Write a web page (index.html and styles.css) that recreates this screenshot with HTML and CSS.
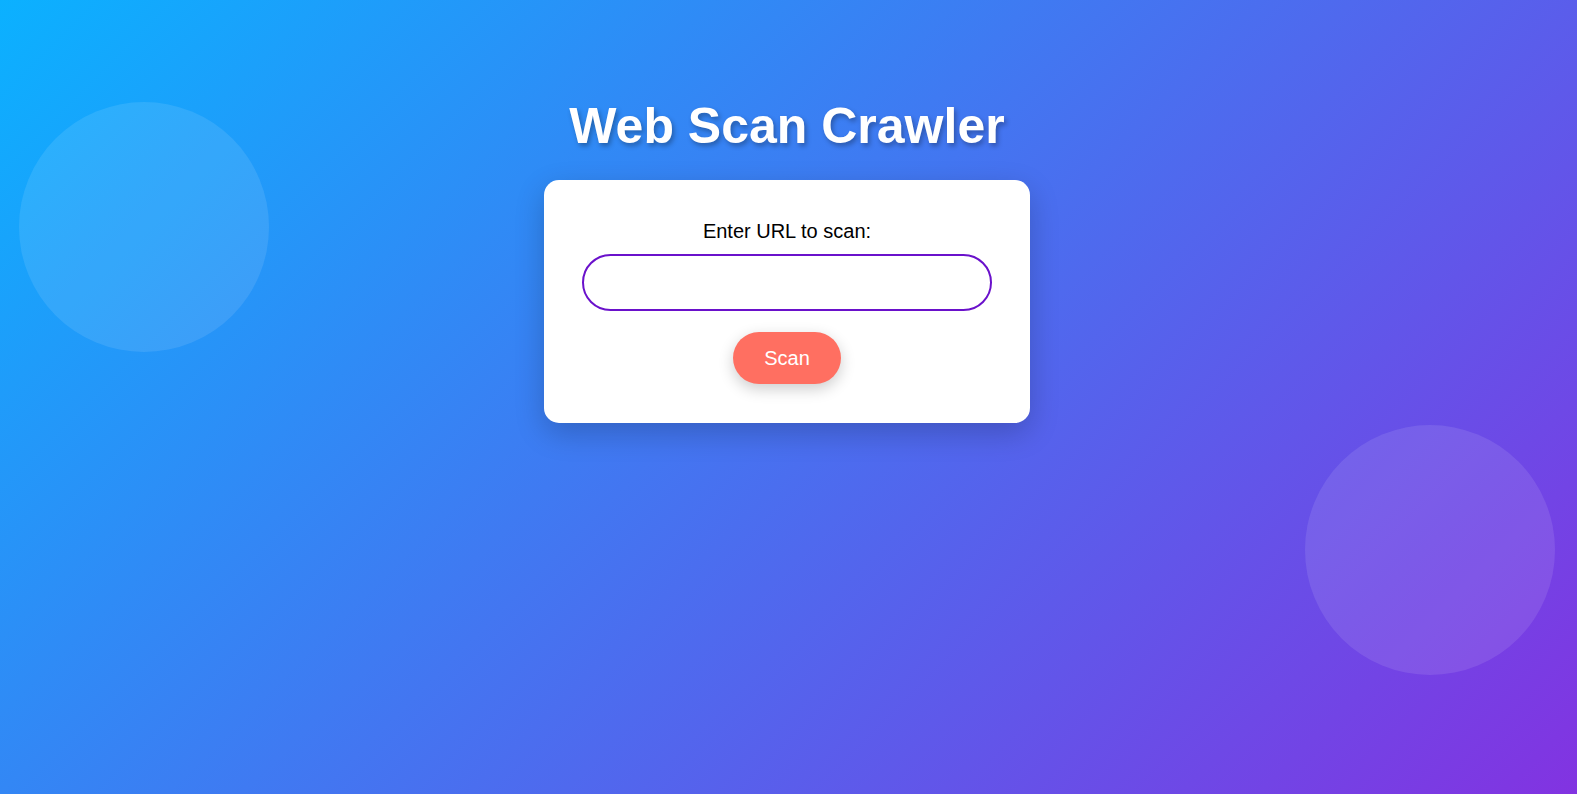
FILE: index.html
```html
<!DOCTYPE html>
<html lang="en">
<head>
<meta charset="utf-8">
<title>Web Scan Crawler</title>
<link rel="stylesheet" href="styles.css">
</head>
<body>
  <div class="bubble bubble-left"></div>
  <div class="bubble bubble-right"></div>
  <main class="page">
    <h1 class="title">Web Scan Crawler</h1>
    <form class="card">
      <label class="label" for="url">Enter URL to scan:</label>
      <input class="url-input" id="url" type="text">
      <button class="scan-btn" type="button">Scan</button>
    </form>
  </main>
</body>
</html>
```

FILE: styles.css
```css
* { box-sizing: border-box; }

html, body {
  margin: 0;
  height: 100%;
}

body {
  position: relative;
  min-height: 100vh;
  overflow: hidden;
  font-family: "Liberation Sans", Arial, sans-serif;
  background: linear-gradient(135deg, #0bb1ff 0%, #8233e1 100%);
}

.bubble {
  position: absolute;
  width: 250px;
  height: 250px;
  border-radius: 50%;
  background: rgba(255, 255, 255, 0.1);
}

.bubble-left {
  top: 102px;
  left: 19px;
}

.bubble-right {
  top: 425px;
  left: 1305px;
}

.page {
  position: relative;
  display: flex;
  flex-direction: column;
  align-items: center;
  padding-top: 97px;
  padding-right: 3px;
}

.title {
  margin: 0 0 25px;
  font-size: 50px;
  font-weight: bold;
  color: #ffffff;
  text-shadow: 2px 3px 5px rgba(0, 0, 0, 0.3);
}

.card {
  width: 486px;
  padding: 40px 38px 39px;
  background: #ffffff;
  border-radius: 15px;
  box-shadow: 0 10px 30px rgba(0, 0, 0, 0.2);
  display: flex;
  flex-direction: column;
  align-items: center;
}

.label {
  display: block;
  font-size: 20px;
  color: #000;
  margin-bottom: 11px;
}

.url-input {
  width: 100%;
  height: 57px;
  padding: 15px 20px;
  font-family: inherit;
  font-size: 20px;
  border: 2px solid #6a11cb;
  border-radius: 30px;
  outline: none;
  background: #fff;
}

.scan-btn {
  margin-top: 21px;
  height: 52px;
  padding: 0 31px;
  font-family: inherit;
  font-size: 20px;
  color: #fff;
  background: #ff6f61;
  border: none;
  border-radius: 30px;
  box-shadow: 0 5px 15px rgba(0, 0, 0, 0.2);
  cursor: pointer;
}
```
